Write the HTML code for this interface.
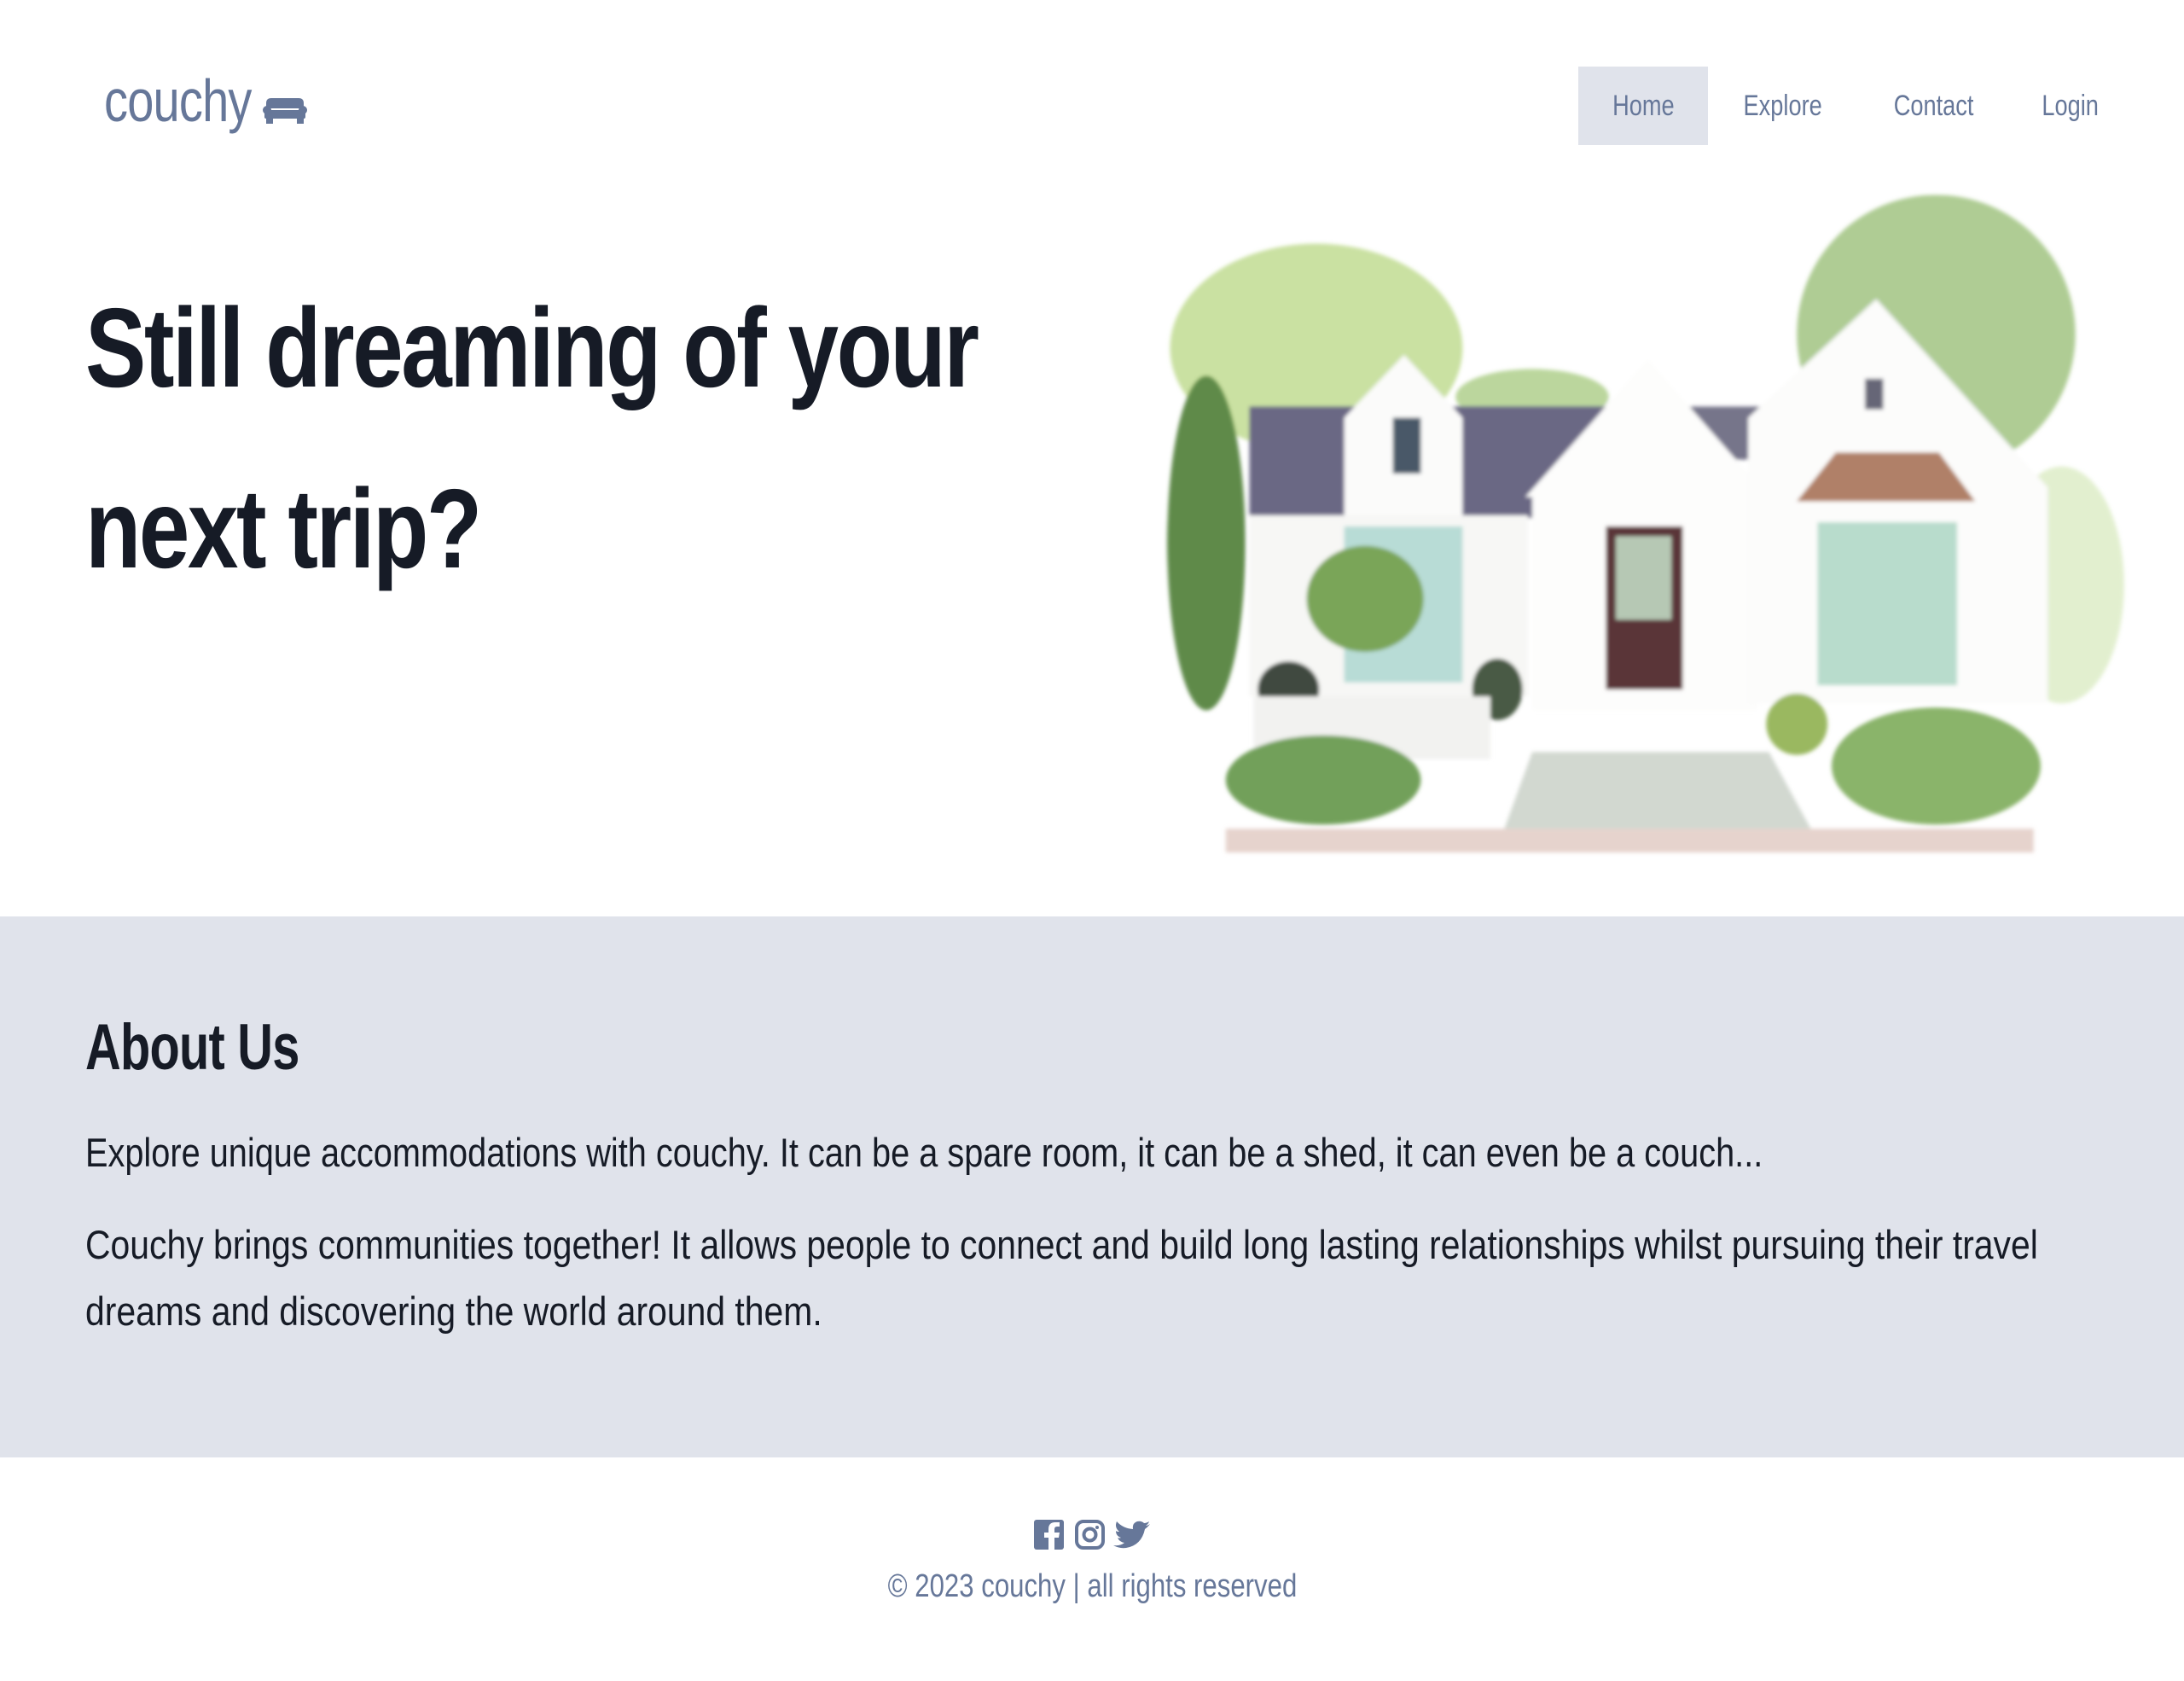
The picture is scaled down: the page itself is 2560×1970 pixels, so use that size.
<!DOCTYPE html>
<html><head><meta charset="utf-8"><style>
*{margin:0;padding:0;box-sizing:border-box}
body{width:2560px;height:1970px;background:#fff;font-family:"Liberation Sans Narrow","Liberation Sans",sans-serif;color:#161b26;position:relative;overflow:hidden}
.sx{display:inline-block;transform-origin:0 0;white-space:nowrap}
.logo{position:absolute;left:122px;top:78px;font-size:70px;color:#667799;letter-spacing:-1px}
.logo .sx{transform:scaleX(0.8)}
.icon{position:absolute;left:308px;top:112px}
.nav{position:absolute;top:78px;height:92px;font-size:34px;color:#667799;line-height:92px;text-align:center}
.nav span{display:inline-block;transform:scaleX(0.8)}
h1{position:absolute;left:100px;top:302px;font-size:132px;font-weight:bold;line-height:212px;letter-spacing:-3px}
h1 .sx{transform:scaleX(0.81)}
.house{position:absolute;left:1347px;top:212px}
.about{position:absolute;left:0;top:1074px;width:2560px;height:634px;background:#e0e3eb}
.about h2{position:absolute;left:100px;top:110px;font-size:76px;font-weight:bold;letter-spacing:-1px}
.about h2 .sx{transform:scaleX(0.76)}
.about p{position:absolute;left:100px;font-size:47px;line-height:78px}
.foot{position:absolute;left:0;width:2560px;text-align:center;color:#667799}
</style></head><body>
<div class="logo"><span class="sx">couchy</span></div>
<svg class="icon" width="52" height="34" viewBox="0 0 52 32"><path d="M10 2h32q6 0 6 6v6h-44v-6q0-6 6-6z" fill="#667799"/><circle cx="5" cy="16" r="5" fill="#667799"/><circle cx="47" cy="16" r="5" fill="#667799"/><rect x="2" y="16" width="48" height="10" rx="2" fill="#667799"/><rect x="4" y="24" width="8" height="8" fill="#667799"/><rect x="40" y="24" width="8" height="8" fill="#667799"/></svg>
<div class="nav" style="left:1850px;width:152px;background:#e0e3eb"><span>Home</span></div>
<div class="nav" style="left:2028px;width:124px"><span>Explore</span></div>
<div class="nav" style="left:2208px;width:116px"><span>Contact</span></div>
<div class="nav" style="left:2382px;width:90px"><span>Login</span></div>
<h1><span class="sx">Still dreaming of your</span><br><span class="sx">next trip?</span></h1>
<svg class="house" width="1151" height="800" viewBox="825 130 705 490">
<defs><filter id="b"><feGaussianBlur stdDeviation="1.5"/></filter></defs>
<g filter="url(#b)">
<ellipse cx="945" cy="250" rx="105" ry="75" fill="#b4d47a" opacity=".7"/>
<ellipse cx="1390" cy="240" rx="100" ry="100" fill="#84b05a" opacity=".65"/>
<ellipse cx="1480" cy="420" rx="45" ry="85" fill="#c5e0a0" opacity=".5"/>
<ellipse cx="1100" cy="285" rx="55" ry="20" fill="#8dbb5a" opacity=".6"/>
<polygon points="897,292 1150,292 1150,372 897,372" fill="#6a6884"/>
<polygon points="1150,292 1280,292 1280,330 1150,330" fill="#76748a"/>
<rect x="897" y="370" width="200" height="130" fill="#f7f7f5"/>
<polygon points="1008,255 965,300 965,370 1050,370 1050,300" fill="#fbfbfa"/>
<rect x="1000" y="300" width="20" height="40" fill="#4a5868"/>
<rect x="965" y="378" width="85" height="112" fill="#b8dcd6"/>
<polygon points="1183,258 1095,357 1100,357 1100,510 1262,510 1262,357 1270,357" fill="#fdfdfc"/>
<rect x="1153" y="378" width="55" height="117" fill="#5a3438"/>
<rect x="1160" y="385" width="40" height="60" fill="#b6c8b4"/>
<polygon points="1347,215 1255,300 1255,505 1470,505 1470,350" fill="#fcfcfb"/>
<polygon points="1318,325 1392,325 1418,360 1290,360" fill="#b08068"/>
<rect x="1305" y="375" width="100" height="117" fill="#b8dccc"/>
<rect x="1339" y="272" width="13" height="22" fill="#667"/>
<ellipse cx="866" cy="390" rx="28" ry="120" fill="#5e8a4a"/>
<ellipse cx="980" cy="430" rx="42" ry="38" fill="#7aa558"/>
<ellipse cx="925" cy="495" rx="22" ry="20" fill="#3f4a40"/>
<ellipse cx="1075" cy="495" rx="18" ry="22" fill="#4a5a44"/>
<rect x="900" y="500" width="170" height="45" fill="#f2f2f0"/>
<ellipse cx="950" cy="560" rx="70" ry="32" fill="#72a05a"/>
<ellipse cx="1390" cy="550" rx="75" ry="42" fill="#8ab46a"/>
<ellipse cx="1290" cy="520" rx="22" ry="22" fill="#9ab860"/>
<polygon points="1100,540 1270,540 1300,595 1080,595" fill="#d2d8d0"/>
<rect x="880" y="595" width="580" height="17" fill="#e0c8c0" opacity=".8"/>
</g>
</svg>
<div class="about">
<h2><span class="sx">About Us</span></h2>
<p style="top:238px"><span class="sx" style="transform:scaleX(0.845)">Explore unique accommodations with couchy. It can be a spare room, it can be a shed, it can even be a couch...</span></p>
<p style="top:346px"><span class="sx" style="transform:scaleX(0.87)">Couchy brings communities together! It allows people to connect and build long lasting relationships whilst pursuing their travel</span><br><span class="sx" style="transform:scaleX(0.87)">dreams and discovering the world around them.</span></p>
</div>
<svg style="position:absolute;left:1212px;top:1780px" width="140" height="36" viewBox="0 0 140 36">
<rect x="0" y="1" width="35" height="35" rx="3" fill="#667799"/><path d="M24 36V22h5l1-6h-6v-4q0-3 3-3h3V4h-5q-8 0-8 8v4h-5v6h5v14z" fill="#fff"/>
<rect x="50" y="3" width="31" height="31" rx="8" fill="none" stroke="#667799" stroke-width="4"/><circle cx="65.5" cy="18.5" r="7" fill="none" stroke="#667799" stroke-width="4"/><circle cx="74" cy="10" r="2" fill="#667799"/>
<path d="M136 6q-3 2-5 2 3-2 4-5-3 2-6 2-3-3-8-2-6 2-5 9-12-1-19-9-3 7 3 12-3 0-4-1 0 6 6 8-2 1-4 0 2 5 8 6-5 4-13 3 7 4 15 3 18-3 22-22 4-3 6-6z" fill="#667799"/>
</svg>
<div class="foot" style="top:1838px;font-size:38px"><span style="display:inline-block;transform:scaleX(0.82)">© 2023 couchy | all rights reserved</span></div>
</body></html>
